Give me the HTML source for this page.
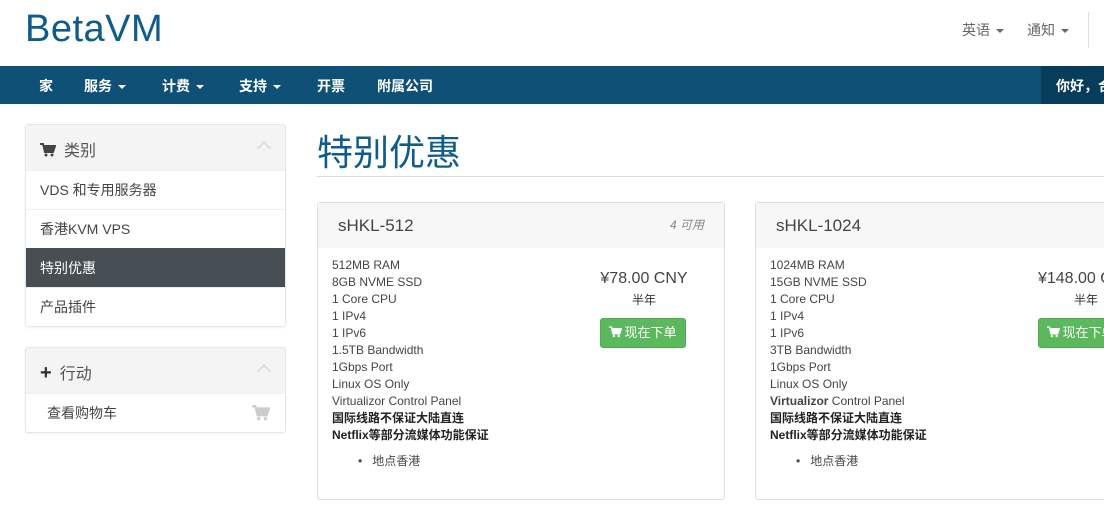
<!DOCTYPE html>
<html><head><meta charset="utf-8"><style>
*{margin:0;padding:0;box-sizing:border-box}
body{width:1104px;height:512px;overflow:hidden;background:#fff;font-family:"Liberation Sans","Noto Sans CJK SC",sans-serif;color:#333;position:relative}
.abs{position:absolute}
.logo{left:25px;top:8px;font-size:38px;color:#0f5b8c;font-weight:300;letter-spacing:0.5px}
.tr{top:20px;font-size:14px;color:#666}
.caret{display:inline-block;width:0;height:0;border-left:4px solid transparent;border-right:4px solid transparent;border-top:4px solid currentColor;vertical-align:middle;margin-left:6px}
.nav{left:0;top:66px;width:1104px;height:38px;background:#0f5077}
.nav span{position:absolute;top:10px;color:#fff;font-size:14px;font-weight:bold}
.navr{left:1041px;top:66px;width:63px;height:38px;background:#083c5b}
.panel{left:25px;width:261px;border:1px solid #e6e6e6;border-radius:3px;background:#fff;box-shadow:0 1px 2px rgba(0,0,0,.05)}
.ph{height:45px;background:#f4f4f4;font-size:16px;color:#555;padding:12px 14px;position:relative}
.it{height:39px;border-top:1px solid #eee;font-size:14px;color:#444;padding:9px 14px}
.it.act{background:#474f55;color:#fff;border-color:#474f55}
.chev{position:absolute;right:16px;top:18px;width:10px;height:10px;border-left:2px solid #ddd;border-top:2px solid #ddd;transform:rotate(45deg)}
.card{top:202px;height:298px;border:1px solid #ddd;border-radius:3px;background:#fff}
.ch{height:45px;background:#f7f7f7;font-size:17px;color:#444;padding:13px 20px;position:relative}
.lines{position:absolute;left:14px;top:54px;font-size:12px;line-height:17px;color:#444}
.price{position:absolute;text-align:center;font-size:16px;color:#444}
.btn{position:absolute;width:86px;height:30px;background:#5cb85c;border:1px solid #4cae4c;border-radius:3px;color:#fff;font-size:13px;text-align:center;line-height:28px}
</style></head><body>
<div class="abs logo">BetaVM</div>
<div class="abs tr" style="left:962px">英语<span class="caret"></span></div>
<div class="abs tr" style="left:1027px">通知<span class="caret"></span></div>
<div class="abs" style="left:1088px;top:12px;width:1px;height:36px;background:#ddd"></div>
<div class="abs nav">
<span style="left:39px">家</span>
<span style="left:84px">服务<i class="caret"></i></span>
<span style="left:162px">计费<i class="caret"></i></span>
<span style="left:239px">支持<i class="caret"></i></span>
<span style="left:317px">开票</span>
<span style="left:377px">附属公司</span>
</div>
<div class="abs navr"><span style="position:absolute;left:15px;top:10px;color:#fff;font-size:14px;font-weight:bold;white-space:nowrap">你好，合</span></div>

<div class="abs panel" style="top:124px">
<div class="ph"><svg width="16" height="14" viewBox="0 0 16 14" style="vertical-align:-1px;margin-right:8px"><path d="M0 1h3l2 8h8l2-6H4" fill="none" stroke="#444" stroke-width="2"/><path d="M4 3h11l-2 6H5z" fill="#444"/><circle cx="6" cy="12" r="1.5" fill="#444"/><circle cx="12" cy="12" r="1.5" fill="#444"/></svg>类别<div class="chev"></div></div>
<div class="it">VDS 和专用服务器</div>
<div class="it">香港KVM VPS</div>
<div class="it act">特别优惠</div>
<div class="it">产品插件</div>
</div>
<div class="abs panel" style="top:347px">
<div class="ph"><span style="font-weight:bold;font-size:20px;margin-right:8px;color:#333;line-height:16px">+</span>行动<div class="chev"></div></div>
<div class="it" style="padding-left:21px;position:relative">查看购物车<svg width="18" height="16" viewBox="0 0 16 14" style="position:absolute;right:15px;top:11px"><path d="M0 1h3l2 8h8l2-6H4" fill="none" stroke="#ccc" stroke-width="2"/><path d="M4 3h11l-2 6H5z" fill="#ccc"/><circle cx="6" cy="12" r="1.5" fill="#ccc"/><circle cx="12" cy="12" r="1.5" fill="#ccc"/></svg></div>
</div>

<div class="abs" style="left:317px;top:124px;font-size:36px;color:#0f5b8c">特别优惠</div>
<div class="abs" style="left:317px;top:176px;width:787px;height:1px;background:#ddd"></div>

<div class="abs card" style="left:317px;width:408px">
<div class="ch">sHKL-512<span style="position:absolute;right:20px;top:13px;font-size:12px;font-style:italic;color:#888">4 可用</span></div>
<div class="lines">512MB RAM<br>8GB NVME SSD<br>1 Core CPU<br>1 IPv4<br>1 IPv6<br>1.5TB Bandwidth<br>1Gbps Port<br>Linux OS Only<br>Virtualizor Control Panel<br><b style="color:#222">国际线路不保证大陆直连<br>Netflix等部分流媒体功能保证</b><div style="margin-top:9px;padding-left:26px">•&nbsp;&nbsp;&nbsp;地点香港</div></div>
<div class="price" style="left:270px;top:67px;width:112px">¥78.00 CNY<div style="font-size:12px;margin-top:3px;color:#333">半年</div></div>
<div class="btn" style="left:282px;top:115px"><svg width="13" height="12" viewBox="0 0 16 14" style="vertical-align:-1px;margin-right:2px"><path d="M0 1h3l2 8h8l2-6H4" fill="none" stroke="#fff" stroke-width="2"/><path d="M4 3h11l-2 6H5z" fill="#fff"/><circle cx="6" cy="12" r="1.5" fill="#fff"/><circle cx="12" cy="12" r="1.5" fill="#fff"/></svg>现在下单</div>
</div>

<div class="abs card" style="left:755px;width:400px">
<div class="ch">sHKL-1024</div>
<div class="lines">1024MB RAM<br>15GB NVME SSD<br>1 Core CPU<br>1 IPv4<br>1 IPv6<br>3TB Bandwidth<br>1Gbps Port<br>Linux OS Only<br><b>Virtualizor</b> Control Panel<br><b style="color:#222">国际线路不保证大陆直连<br>Netflix等部分流媒体功能保证</b><div style="margin-top:9px;padding-left:26px">•&nbsp;&nbsp;&nbsp;地点香港</div></div>
<div class="price" style="left:270px;top:67px;width:120px">¥148.00 CNY<div style="font-size:12px;margin-top:3px;color:#333">半年</div></div>
<div class="btn" style="left:282px;top:115px"><svg width="13" height="12" viewBox="0 0 16 14" style="vertical-align:-1px;margin-right:2px"><path d="M0 1h3l2 8h8l2-6H4" fill="none" stroke="#fff" stroke-width="2"/><path d="M4 3h11l-2 6H5z" fill="#fff"/><circle cx="6" cy="12" r="1.5" fill="#fff"/><circle cx="12" cy="12" r="1.5" fill="#fff"/></svg>现在下单</div>
</div>
</body></html>
